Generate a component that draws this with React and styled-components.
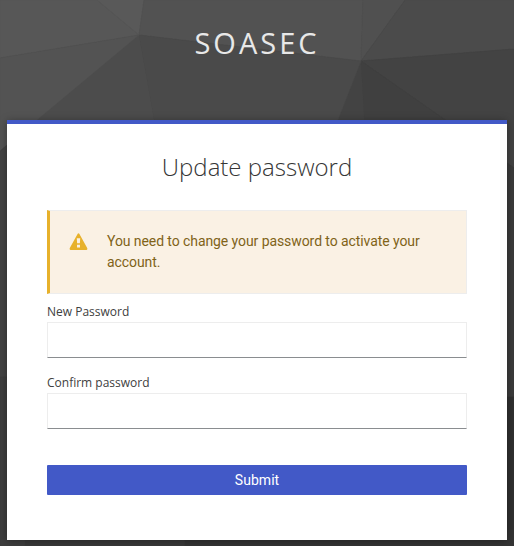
import React from "react";
import styled, { createGlobalStyle } from "styled-components";

const GlobalStyle = createGlobalStyle`
  * { box-sizing: border-box; }
  body { margin: 0; background: #393939; font-family: "Open Sans", sans-serif; -webkit-font-smoothing: antialiased; }
`;

const Page = styled.div`
  position: relative;
  height: 546px;
  overflow: hidden;
  padding: 0 7px;
`;

const Backdrop = styled.svg`
  position: absolute;
  inset: 0;
  z-index: -1;
`;

const Brand = styled.header`
  height: 120px;
  padding: 23px 0 0;
  text-align: center;
  font-size: 29px;
  font-weight: 400;
  line-height: 40px;
  letter-spacing: 3px;
  color: #e8e8e8;
`;

const Card = styled.main`
  height: 420px;
  padding: 26px 40px 0;
  border-top: 4px solid #4259c7;
  background: #fff;
  box-shadow: 0 1px 8px rgba(0, 0, 0, 0.35);
`;

const Title = styled.h1`
  margin: 0 0 26px;
  font-size: 24px;
  line-height: 34px;
  font-weight: 300;
  text-align: center;
  color: #363636;
`;

const Alert = styled.div`
  display: flex;
  height: 84px;
  padding: 20px 19px;
  border: 1px solid #ededed;
  border-left: 3px solid #e7b12b;
  background: #faf1e4;
  color: #806318;
`;

const WarningIcon = styled.svg`
  flex: none;
  width: 19px;
  height: 17px;
  margin: 2px 19px 0 0;
`;

const AlertText = styled.p`
  margin: 0;
  font: 400 14px/21px Roboto, sans-serif;
  letter-spacing: -0.08px;
`;

const Form = styled.form`
  display: flex;
  flex-direction: column;
`;

const Field = styled.label`
  display: block;
  height: 71px;
  padding-top: 9px;
  font-size: 12px;
  line-height: 18px;
  color: #404040;
`;

const Input = styled.input`
  display: block;
  width: 100%;
  height: 36px;
  margin-top: 1px;
  padding: 6px 8px;
  border: 1px solid #ededed;
  border-bottom-color: #8a8d90;
  border-radius: 0;
  outline: none;
`;

const SubmitButton = styled.button`
  height: 30px;
  margin-top: 29px;
  padding: 0;
  border: 0;
  border-radius: 1px;
  background: #4259c7;
  color: #fff;
  font: 400 14px/30px Roboto, sans-serif;
  letter-spacing: 0.05px;
`;

const facets = [
  ["0,0 97,0 139,35 0,58", "#575757"],
  ["97,0 144,0 139,35", "#595959"],
  ["144,0 363,0 361,61 139,35", "#525252"],
  ["363,0 405,0 361,61", "#505050"],
  ["405,0 514,0 514,49 361,61", "#4b4b4b"],
  ["514,49 514,168 361,61", "#434343"],
  ["361,61 514,168 365,130", "#404040"],
  ["361,61 365,130 334,130", "#434343"],
  ["139,35 361,61 334,130 156,130", "#4a4a4a"],
  ["139,35 156,130 25,130", "#4c4c4c"],
  ["0,58 139,35 25,130 0,151", "#535353"],
  ["0,151 25,130 25,377 0,377", "#434343"],
  ["0,377 25,377 25,546 0,546", "#3e3e3e"],
  ["490,151 514,168 514,397 490,397", "#3b3b3b"],
  ["490,397 514,397 514,546 490,546", "#303030"],
  ["185,530 514,530 514,546 185,546", "#343434"],
];

export default function App() {
  return (
    <>
      <GlobalStyle />
      <Page>
        <Backdrop width="514" height="546" viewBox="0 0 514 546" aria-hidden="true">
          <rect width="514" height="546" fill="#393939" />
          {facets.map(([points, color]) => (
            <polygon key={points} points={points} fill={color} stroke={color} strokeWidth="0.5" />
          ))}
        </Backdrop>
        <Brand>SOASEC</Brand>
        <Card>
          <Title>Update password</Title>
          <Alert role="alert">
            <WarningIcon viewBox="0 0 19 17" aria-hidden="true">
              <path
                fill="#e7b12b"
                fillRule="evenodd"
                d="M8.700.8Q9.500-.4 10.300.8L18.200 15.100Q18.800 17 17.200 17H1.800Q.2 17 .8 15.100ZM7.800 5.200L8.100 10.300H10.900L11.200 5.200ZM8 11.700V14.500H11V11.700Z"
              />
            </WarningIcon>
            <AlertText>You need to change your password to activate your account.</AlertText>
          </Alert>
          <Form onSubmit={(event) => event.preventDefault()}>
            <Field>
              New Password
              <Input type="password" />
            </Field>
            <Field>
              Confirm password
              <Input type="password" />
            </Field>
            <SubmitButton type="submit">Submit</SubmitButton>
          </Form>
        </Card>
      </Page>
    </>
  );
}
